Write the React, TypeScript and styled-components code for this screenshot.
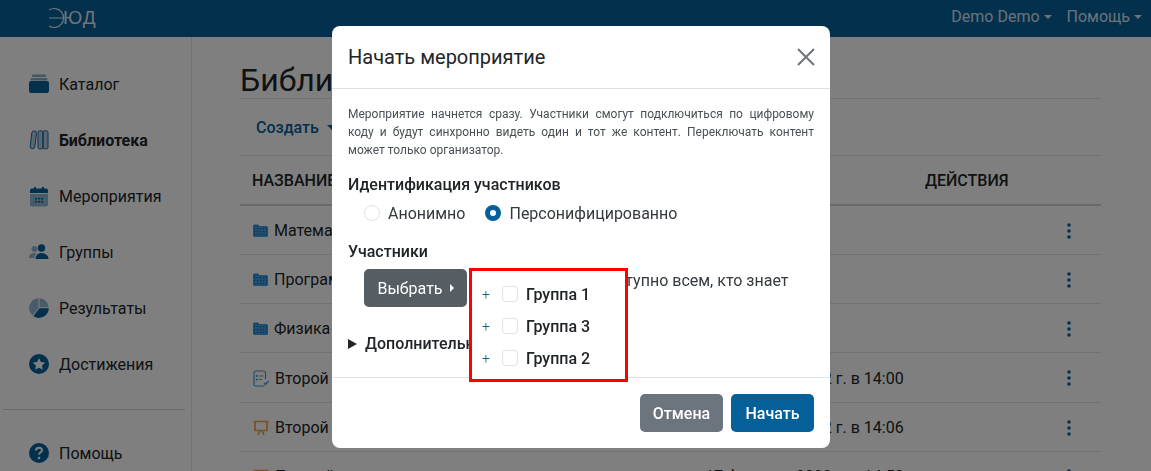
import React from 'react';
import styled, { createGlobalStyle } from 'styled-components';

const primary = '#05609a';
const ink = '#212529';
const folderBlue = '#3f9be0';

const GlobalStyle = createGlobalStyle`
  html, body {
    margin: 0;
    height: 100%;
    overflow: hidden;
    background: #fff;
    font-family: Roboto, 'Liberation Sans', sans-serif;
    color: ${ink};
  }
  * { box-sizing: border-box; }
`;

const CatalogIcon = () => (
  <svg width="20" height="20" viewBox="0 0 20 20">
    <rect x="3" y="0.5" width="14" height="2.5" rx="1" fill={primary} opacity="0.5" />
    <rect x="1.5" y="4" width="17" height="2.5" rx="1" fill={primary} opacity="0.5" />
    <rect x="0" y="7" width="20" height="12" rx="2" fill={primary} />
  </svg>
);

const LibraryIcon = () => (
  <svg width="20" height="20" viewBox="0 0 20 20" fill={primary} fillOpacity="0.3" stroke={primary} strokeWidth="0.9">
    <rect x="2" y="0.8" width="4.600" height="18" rx="2.300" transform="rotate(7 4.300 10)" />
    <rect x="9" y="0.8" width="5" height="18" rx="1.400" />
    <rect x="14" y="0.8" width="5" height="18" rx="1.400" />
  </svg>
);

const CalendarIcon = () => (
  <svg width="20" height="21" viewBox="0 0 20 21">
    <path d="M1 8h18v10.500a2 2 0 0 1-2 2H3a2 2 0 0 1-2-2z" fill={primary} opacity="0.45" />
    <path d="M1 7V4.500a2 2 0 0 1 2-2h2V1h2v1.500h6V1h2v1.500h2a2 2 0 0 1 2 2V7z" fill={primary} />
    <path d="M6 12h2v1.500H6zM9 12h2v1.500H9zM12 12h2v1.500h-2zM6 15h2v1.500H6zM9 15h2v1.500H9zM12 15h2v1.500h-2z" fill={primary} />
  </svg>
);

const GroupsIcon = () => (
  <svg width="20" height="16" viewBox="0 0 20 16">
    <circle cx="5.500" cy="5" r="3" fill={primary} opacity="0.45" />
    <path d="M0 14c0-3.500 2.500-5 5.500-5 1 0 1.800.2 2.500.5-1.500 1-2.500 2.600-2.500 4.500z" fill={primary} opacity="0.45" />
    <circle cx="12.500" cy="4" r="3.700" fill={primary} />
    <path d="M6.500 15c0-3.500 2.500-6 6-6s7 2.500 7 6z" fill={primary} />
  </svg>
);

const ResultsIcon = () => (
  <svg width="20" height="20" viewBox="0 0 20 20">
    <path d="M9.500 0.200V10.300L3.500 17.300A9.800 9.800 0 0 1 9.500 0.200z" fill={primary} opacity="0.45" />
    <path d="M10.500 0.200A9.500 9.500 0 0 1 19.500 9.300H10.500z" fill={primary} opacity="0.45" />
    <path d="M19.800 10.300A9.800 9.800 0 0 1 4.300 18L10.500 10.300z" fill={primary} />
  </svg>
);

const StarIcon = () => (
  <svg width="20" height="20" viewBox="0 0 20 20">
    <circle cx="10" cy="10" r="10" fill={primary} />
    <path d="M10 4l1.900 3.900 4.300.6-3.100 3 .7 4.300L10 13.800l-3.800 2 .7-4.300-3.100-3 4.300-.6z" fill="#fff" />
  </svg>
);

const HelpIcon = () => (
  <svg width="20" height="20" viewBox="0 0 20 20">
    <circle cx="10" cy="10" r="10" fill={primary} />
    <path d="M7 7.500c0-1.700 1.300-2.800 3-2.800s3 1.100 3 2.600c0 2.200-3 2.200-3 4.200" fill="none" stroke="#fff" strokeWidth="2" />
    <circle cx="10" cy="15" r="1.300" fill="#fff" />
  </svg>
);

const FolderIcon = () => (
  <svg width="15" height="13" viewBox="0 0 15 13">
    <defs>
      <pattern id="folder-dots" width="3" height="3" patternUnits="userSpaceOnUse">
        <rect width="3" height="3" fill={folderBlue} />
        <rect x="1" y="1" width="1" height="1" fill={primary} />
      </pattern>
    </defs>
    <path d="M0 2a1.500 1.500 0 0 1 1.500-1.500h3.500l1.500 1.500h7A1.500 1.500 0 0 1 15 3.500v8a1.500 1.500 0 0 1-1.500 1.500h-12A1.500 1.500 0 0 1 0 11.500z" fill="url(#folder-dots)" />
  </svg>
);

const TestIcon = () => (
  <svg width="16" height="17" viewBox="0 0 16 17" fill="none" stroke={folderBlue} strokeWidth="1.200">
    <path d="M12.500 9V3a2 2 0 0 0-2-2H3a2 2 0 0 0-2 2v11.500a1.500 1.500 0 0 0 1.500 1.500h9" />
    <path d="M6 6h4.500M6 9.500h3" />
    <circle cx="3.800" cy="6" r="0.500" />
    <circle cx="3.800" cy="9.500" r="0.500" />
    <path d="M11 13l1.500 1.500L15.500 11" />
  </svg>
);

const BoardIcon = () => (
  <svg width="16" height="16" viewBox="0 0 16 16" fill="none" stroke="#f4a04a" strokeWidth="1.700">
    <path d="M0.500 1.500h15M2 1.500v9h12v-9M5 15l2-4.500M11 15l-2-4.500" />
  </svg>
);

const DotsIcon = () => (
  <svg width="4" height="16" viewBox="0 0 4 16" fill={primary}>
    <circle cx="2" cy="2" r="1.800" />
    <circle cx="2" cy="8" r="1.800" />
    <circle cx="2" cy="14" r="1.800" />
  </svg>
);

const Navbar = styled.header`
  height: 37px;
  background: ${primary};
  display: flex;
  align-items: center;
  justify-content: space-between;
  padding: 0 9px 0 48px;
`;

const Logo = styled.div`
  display: flex;
  align-items: center;
  color: rgba(255, 255, 255, 0.88);
  font-size: 19px;
  letter-spacing: 1.500px;
  font-family: 'Liberation Sans', sans-serif;
  margin-top: -2px;
`;

const LogoMark = styled.svg`
  margin-right: -3px;
`;

const NavMenu = styled.nav`
  display: flex;
  gap: 15px;
`;

const NavLink = styled.span`
  color: rgba(255, 255, 255, 0.85);
  font-size: 16px;
  display: flex;
  align-items: center;
  gap: 4px;
  position: relative;
  top: -2px;

  &::after {
    content: '';
    border-top: 4px solid currentColor;
    border-left: 4px solid transparent;
    border-right: 4px solid transparent;
  }
`;

const Layout = styled.div`
  display: flex;
  height: 434px;
  overflow: hidden;
`;

const Sidebar = styled.aside`
  width: 192px;
  flex: none;
  border-right: 1px solid #dee2e6;
  padding: 19px 6px 0 3px;
`;

const SideItem = styled.div<{ $active?: boolean }>`
  height: 56px;
  display: flex;
  align-items: center;
  padding-left: 26px;
  gap: 10px;
  font-size: 16px;
  font-weight: ${p => (p.$active ? 700 : 400)};
`;

const IconSlot = styled.span`
  width: 20px;
  height: 21px;
  flex: none;
  display: flex;
  align-items: center;
  justify-content: center;
`;

const SideDivider = styled.hr`
  margin: 17px 0 15px;
  border: 0;
  border-top: 1px solid #ced4da;
`;

const Main = styled.main`
  flex: none;
  width: 861px;
  margin-left: 48px;
`;

const Title = styled.h1`
  margin: 0;
  height: 62px;
  padding-top: 24px;
  font-size: 32px;
  line-height: 38px;
  font-weight: 400;
  border-bottom: 1px solid #dee2e6;
`;

const Toolbar = styled.div`
  height: 57px;
  display: flex;
  align-items: center;
  padding-left: 16px;
  color: ${primary};
  font-size: 16px;
  font-weight: 500;
  gap: 8px;
  border-bottom: 1px solid #dee2e6;

  &::after {
    content: '';
    border-top: 5px solid currentColor;
    border-left: 5px solid transparent;
    border-right: 5px solid transparent;
  }
`;

const Row = styled.div<{ $head?: boolean; $tall?: boolean }>`
  height: ${p => (p.$head || p.$tall ? '50px' : '49px')};
  display: grid;
  grid-template-columns: 1fr 220px 176px;
  align-items: center;
  padding: ${p => (p.$head ? '0' : '1px')} 0 0 12px;
  border-bottom: ${p => (p.$head ? '2px solid #ced4da' : '1px solid #dee2e6')};
  font-size: 16px;
  font-weight: ${p => (p.$head ? 500 : 400)};
`;

const NameCell = styled.div`
  display: flex;
  align-items: center;
  gap: 6px;
  padding-left: 1px;
  white-space: nowrap;
`;

const DateCell = styled.div`
  white-space: nowrap;
  text-align: right;
  padding-right: 26px;
`;

const ActionCell = styled.div`
  display: flex;
  justify-content: flex-end;
  padding-right: 30px;
`;

const Backdrop = styled.div`
  position: fixed;
  inset: 0;
  background: rgba(0, 0, 0, 0.5);
`;

const Modal = styled.section`
  position: fixed;
  left: 332px;
  top: 26px;
  width: 498px;
  height: 422px;
  background: #fff;
  border-radius: 8px;
  display: flex;
  flex-direction: column;
`;

const ModalHeader = styled.div`
  height: 63px;
  flex: none;
  display: flex;
  align-items: center;
  justify-content: space-between;
  padding: 0 15px 0 16px;
  border-bottom: 1px solid #dee2e6;
`;

const ModalTitle = styled.h2`
  margin: 0;
  font-size: 20px;
  font-weight: 400;
`;

const ModalBody = styled.div`
  flex: 1;
  padding: 16px 16px 0;
  border-bottom: 1px solid #dee2e6;
`;

const Lead = styled.p`
  margin: 0 0 14px;
  font-size: 12px;
  line-height: 18px;
  text-align: justify;
  color: #495057;
`;

const Label = styled.div`
  font-size: 16px;
  font-weight: 500;
  line-height: 24px;
`;

const RadioRow = styled.div`
  display: flex;
  align-items: center;
  padding-left: 16px;
  height: 32px;
  gap: 20px;
  margin-bottom: 11px;
`;

const RadioItem = styled.label`
  display: flex;
  align-items: center;
  gap: 8px;
  font-size: 16px;
  color: #343a40;
`;

const Radio = styled.span<{ $on?: boolean }>`
  width: 16px;
  height: 16px;
  border-radius: 50%;
  background: #fff;
  border: ${p => (p.$on ? `5px solid ${primary}` : '1px solid #dee2e6')};
`;

const PickRow = styled.div`
  display: flex;
  align-items: flex-start;
  padding-left: 16px;
  gap: 25px;
  margin-top: 5px;
`;

const SelectButton = styled.button`
  width: 103px;
  height: 38px;
  border: 0;
  border-radius: 5px;
  background: #565e64;
  color: #fff;
  font: 400 16px Roboto, sans-serif;
  display: flex;
  align-items: center;
  justify-content: center;
  gap: 7px;
  flex: none;

  &::after {
    content: '';
    border-left: 4px solid currentColor;
    border-top: 4px solid transparent;
    border-bottom: 4px solid transparent;
  }
`;

const PickHint = styled.div`
  font-size: 16px;
  line-height: 24px;
  color: #343a40;
`;

const Extra = styled.div`
  display: flex;
  align-items: center;
  gap: 8px;
  margin-top: 17px;
  font-size: 16px;
  font-weight: 500;
  white-space: nowrap;

  &::before {
    content: '';
    border-left: 9px solid ${ink};
    border-top: 5px solid transparent;
    border-bottom: 5px solid transparent;
  }
`;

const ModalFooter = styled.div`
  height: 70px;
  flex: none;
  display: flex;
  justify-content: flex-end;
  gap: 8px;
  padding: 16px 16px 0;
`;

const FooterButton = styled.button<{ $primary?: boolean }>`
  width: 83px;
  height: 38px;
  border: 0;
  border-radius: 5px;
  background: ${p => (p.$primary ? primary : '#6c757d')};
  color: #fff;
  font: 500 16px Roboto, sans-serif;
`;

const CloseButton = styled.span`
  display: flex;
  color: #6c757d;
`;

const GroupMenu = styled.div`
  position: absolute;
  left: 137px;
  top: 242px;
  width: 159px;
  height: 114px;
  background: #fff;
  border: 3px solid #f00;
  padding: 7px 0 0 10px;
`;

const GroupRow = styled.div`
  height: 32px;
  display: flex;
  align-items: center;
  font-size: 16px;
  font-weight: 500;
`;

const Plus = styled.span`
  width: 20px;
  color: ${primary};
  font-size: 14px;
  font-weight: 300;
`;

const Check = styled.span`
  width: 16px;
  height: 16px;
  border: 1px solid #dee2e6;
  border-radius: 4px;
  margin-right: 8px;
`;

const sideItems = [
  { label: 'Каталог', icon: <CatalogIcon /> },
  { label: 'Библиотека', icon: <LibraryIcon />, active: true },
  { label: 'Мероприятия', icon: <CalendarIcon /> },
  { label: 'Группы', icon: <GroupsIcon /> },
  { label: 'Результаты', icon: <ResultsIcon /> },
  { label: 'Достижения', icon: <StarIcon /> },
];

const rows = [
  { name: 'Математика', icon: <FolderIcon />, date: '' },
  { name: 'Программирование', icon: <FolderIcon />, date: '' },
  { name: 'Физика', icon: <FolderIcon />, date: '' },
  { name: 'Второй тест', icon: <TestIcon />, date: '22 февраля 2022 г. в 14:00', tall: true },
  { name: 'Второй урок', icon: <BoardIcon />, date: '22 февраля 2022 г. в 14:06' },
  { name: 'Первый урок', icon: <BoardIcon />, date: '17 февраля 2022 г. в 14:50' },
];

const App = () => (
  <>
    <GlobalStyle />
    <Navbar>
      <Logo>
        <LogoMark width="18" height="22" viewBox="0 0 18 22" fill="none" stroke="currentColor" strokeWidth="1.200">
          <path d="M1 3a9.500 9.500 0 1 1 0 16M1 11h15" />
        </LogoMark>
        ЮД
      </Logo>
      <NavMenu>
        <NavLink>Demo Demo</NavLink>
        <NavLink>Помощь</NavLink>
      </NavMenu>
    </Navbar>
    <Layout>
      <Sidebar>
        {sideItems.map(item => (
          <SideItem key={item.label} $active={item.active}>
            <IconSlot>{item.icon}</IconSlot>
            {item.label}
          </SideItem>
        ))}
        <SideDivider />
        <SideItem>
          <IconSlot><HelpIcon /></IconSlot>
          Помощь
        </SideItem>
      </Sidebar>
      <Main>
        <Title>Библиотека</Title>
        <Toolbar>Создать</Toolbar>
        <Row $head>
          <div>НАЗВАНИЕ</div>
          <div />
          <div>ДЕЙСТВИЯ</div>
        </Row>
        {rows.map(row => (
          <Row key={row.name} $tall={row.tall}>
            <NameCell>{row.icon}{row.name}</NameCell>
            <DateCell>{row.date}</DateCell>
            <ActionCell><DotsIcon /></ActionCell>
          </Row>
        ))}
      </Main>
    </Layout>
    <Backdrop />
    <Modal>
      <ModalHeader>
        <ModalTitle>Начать мероприятие</ModalTitle>
        <CloseButton>
          <svg width="18" height="18" viewBox="0 0 18 18" stroke="currentColor" strokeWidth="2">
            <path d="M1 1l16 16M17 1L1 17" />
          </svg>
        </CloseButton>
      </ModalHeader>
      <ModalBody>
        <Lead>
          Мероприятие начнется сразу. Участники смогут подключиться по цифровому коду и будут синхронно
          видеть один и тот же контент. Переключать контент может только организатор.
        </Lead>
        <Label>Идентификация участников</Label>
        <RadioRow>
          <RadioItem><Radio />Анонимно</RadioItem>
          <RadioItem><Radio $on />Персонифицированно</RadioItem>
        </RadioRow>
        <Label>Участники</Label>
        <PickRow>
          <SelectButton>Выбрать</SelectButton>
          <PickHint>Мероприятие доступно всем, кто знает код</PickHint>
        </PickRow>
        <Extra>Дополнительные настройки</Extra>
      </ModalBody>
      <ModalFooter>
        <FooterButton>Отмена</FooterButton>
        <FooterButton $primary>Начать</FooterButton>
      </ModalFooter>
      <GroupMenu>
        {['Группа 1', 'Группа 3', 'Группа 2'].map(name => (
          <GroupRow key={name}>
            <Plus>+</Plus>
            <Check />
            {name}
          </GroupRow>
        ))}
      </GroupMenu>
    </Modal>
  </>
);

export default App;
